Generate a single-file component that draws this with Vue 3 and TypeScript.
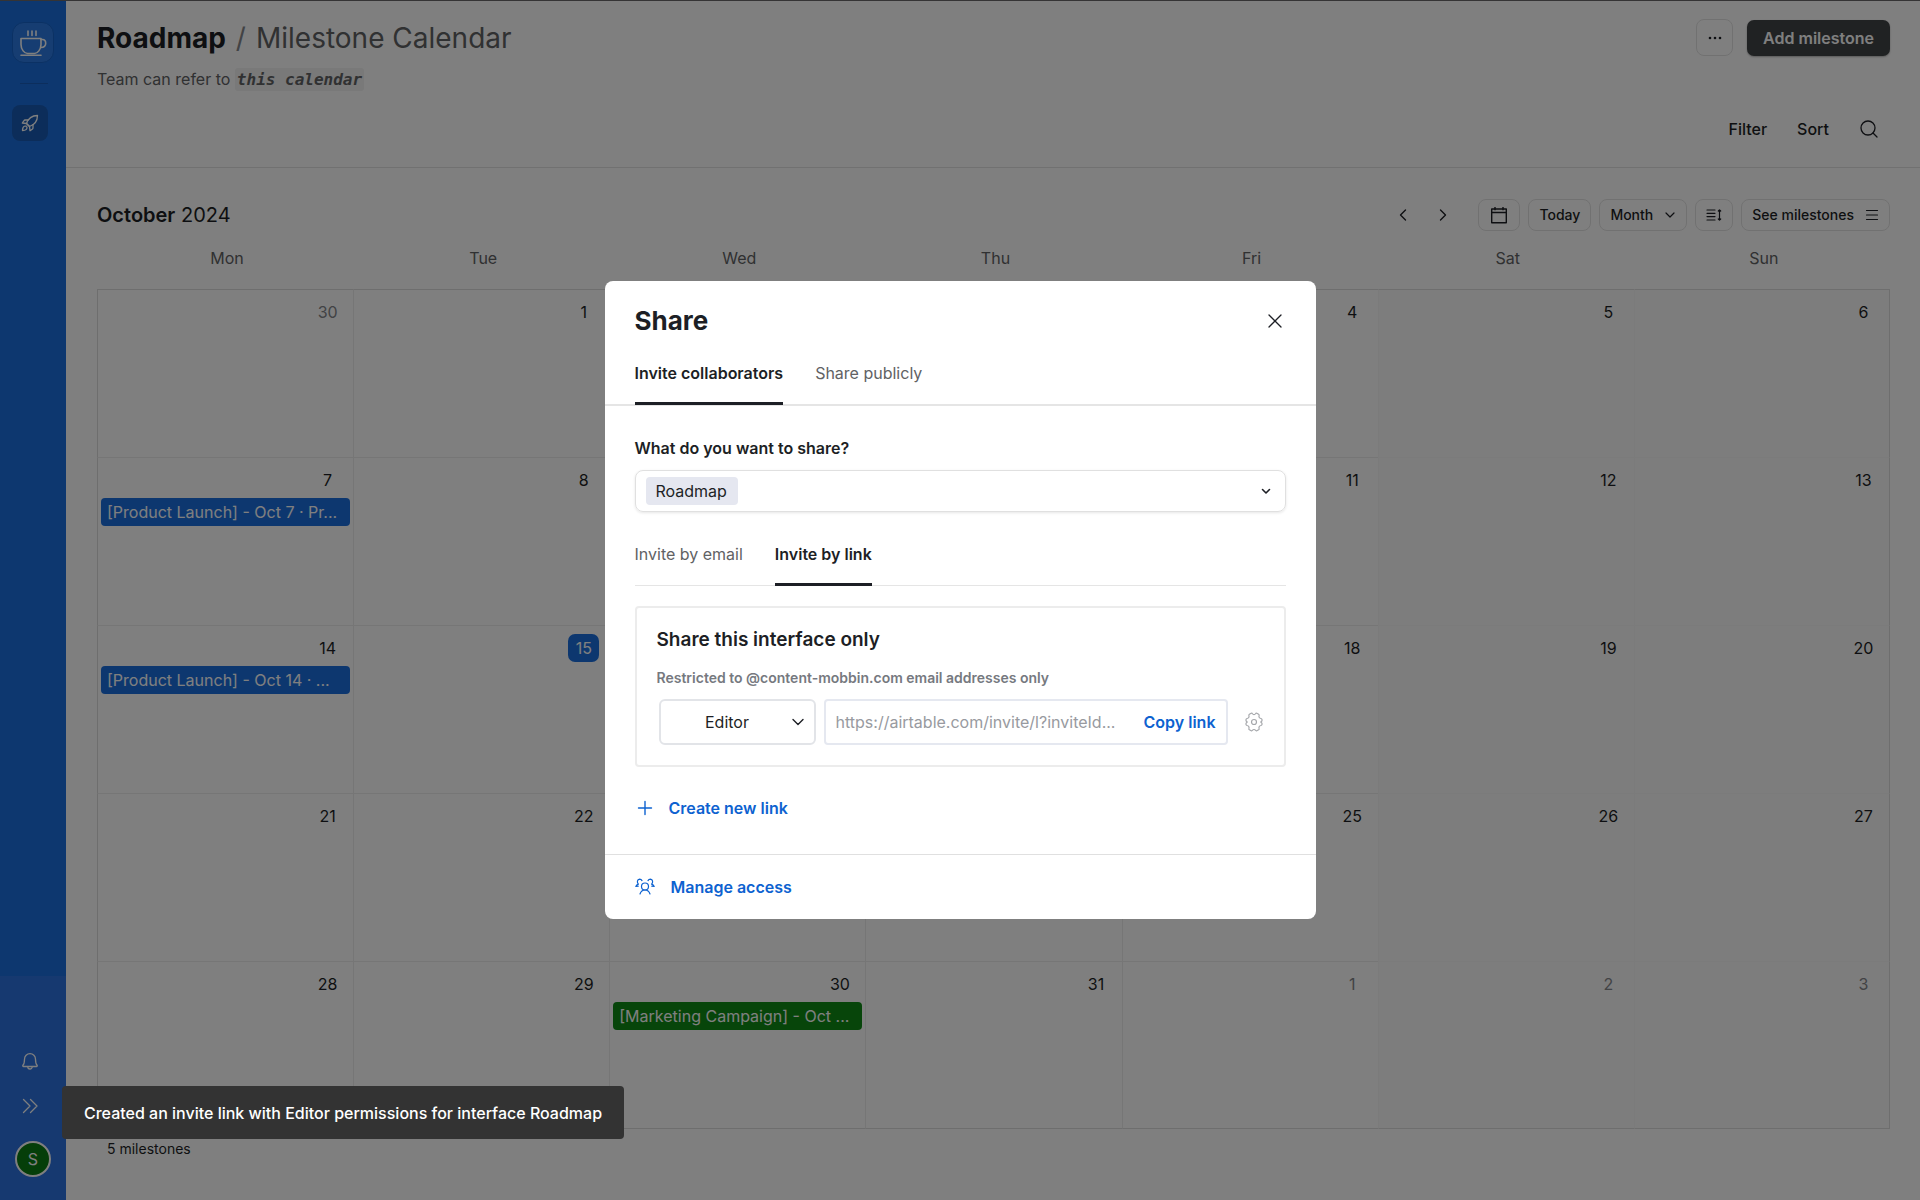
<script setup lang="ts">
import { ref } from 'vue'

interface DayEvent {
  text: string
  tone: 'blue' | 'green'
}

interface Day {
  date: number
  outside: boolean
  today: boolean
  event?: DayEvent
}

const weekdays: string[] = ['Mon', 'Tue', 'Wed', 'Thu', 'Fri', 'Sat', 'Sun']

const events: Record<number, DayEvent> = {
  7: { text: '[Product Launch] - Oct 7 · Pr...', tone: 'blue' },
  14: { text: '[Product Launch] - Oct 14 · ...', tone: 'blue' },
  30: { text: '[Marketing Campaign] - Oct ...', tone: 'green' },
}

const weeks: Day[][] = Array.from({ length: 5 }, (_, week) =>
  Array.from({ length: 7 }, (_, weekday) => {
    const n = week * 7 + weekday
    const inMonth = n >= 1 && n <= 31
    return {
      date: n === 0 ? 30 : inMonth ? n : n - 31,
      outside: !inMonth,
      today: n === 15,
      event: inMonth ? events[n] : undefined,
    }
  }),
)

const shareTarget = ref('Roadmap')
const role = ref('Editor')
const inviteUrl = ref('https://airtable.com/invite/l?inviteId...')
</script>

<template>
  <div class="app">
    <nav class="sidebar" aria-label="Workspace">
      <div class="side-top">
        <button class="logo" type="button" aria-label="Home">
          <svg width="28" height="28" viewBox="0 0 28 28" fill="none" stroke="currentColor" stroke-width="1.6" stroke-linecap="round" stroke-linejoin="round">
            <path d="M9 2v4.500M13 2v4.500M17 2v4.500" />
            <path d="M2 9.500h20v6c0 5-3.500 9-6.500 9h-7C5.500 24.500 2 20.500 2 15.500z" />
            <path d="M22 10.500h1.500c2 0 3.200 1.500 3.200 3.800 0 2.500-2 4.200-5 4.200" />
            <path d="M2 26.200h20" />
          </svg>
        </button>
        <hr class="side-rule" />
        <button class="rocket" type="button" aria-label="Interfaces">
          <svg width="20" height="20" viewBox="0 0 20 20" fill="none" stroke="currentColor" stroke-width="1.300" stroke-linecap="round" stroke-linejoin="round">
            <path d="M6.500 10.500C8 6 11.500 2.600 17.500 2.500c-.1 6-3.500 9.500-8 11z" />
            <path d="M8.300 7H5.200c-.6 0-1.100.3-1.400.8L2.300 10l4.200.5M13 11.700v3.100c0 .6-.3 1.100-.8 1.400L10 17.700l-.5-4.200M6.500 10.500l3 3" />
            <path d="M6.200 13.200c-1.300-.5-2.700.2-3.200 1.500-.3.900-.5 1.800-.5 2.800 1 0 1.900-.2 2.800-.5 1.300-.5 2-1.900 1.500-3.200" />
          </svg>
        </button>
      </div>
      <div class="side-bottom">
        <button class="side-icon" type="button" aria-label="Notifications">
          <svg width="20" height="20" viewBox="0 0 20 20" fill="none" stroke="currentColor" stroke-width="1.300" stroke-linecap="round" stroke-linejoin="round">
            <path d="M4.500 8.200a5.500 5.500 0 0 1 11 0c0 3.600.8 5.200 1.600 6 .4.500.1 1.300-.6 1.300H3.500c-.7 0-1-.8-.6-1.300.8-.8 1.600-2.400 1.600-6z" />
            <path d="M7.800 15.800a2.200 2.200 0 0 0 4.400 0" />
          </svg>
        </button>
        <button class="side-icon" type="button" aria-label="Expand">
          <svg width="20" height="20" viewBox="0 0 20 20" fill="none" stroke="currentColor" stroke-width="1.300" stroke-linecap="round" stroke-linejoin="round">
            <path d="M3.500 3.500 10 10l-6.500 6.500M10.500 3.500 17 10l-6.500 6.500" />
          </svg>
        </button>
        <button class="avatar" type="button">S</button>
      </div>
    </nav>

    <main class="main">
      <header class="header">
        <div class="title-row">
          <h1 class="title"><b>Roadmap</b><span class="slash">/</span><span class="page">Milestone Calendar</span></h1>
          <button class="more" type="button" aria-label="More">
            <svg width="16" height="16" viewBox="0 0 16 16" fill="currentColor">
              <circle cx="3" cy="8" r="1.300" /><circle cx="8" cy="8" r="1.300" /><circle cx="13" cy="8" r="1.300" />
            </svg>
          </button>
          <button class="add" type="button">Add milestone</button>
        </div>
        <p class="subtitle">Team can refer to <code>this calendar</code></p>
        <div class="tools">
          <button class="plain" type="button">Filter</button>
          <button class="plain" type="button">Sort</button>
          <button class="plain" type="button" aria-label="Search">
            <svg width="20" height="20" viewBox="0 0 20 20" fill="none" stroke="currentColor" stroke-width="1.300" stroke-linecap="round">
              <circle cx="9" cy="9" r="7" /><path d="m14 14 4 4" />
            </svg>
          </button>
        </div>
      </header>

      <section class="calendar">
        <div class="toolbar">
          <h2 class="month"><b>October</b> 2024</h2>
          <div class="arrows">
            <button class="arrow" type="button" aria-label="Previous month">
              <svg width="16" height="16" viewBox="0 0 16 16" fill="none" stroke="currentColor" stroke-width="1.400" stroke-linecap="round" stroke-linejoin="round"><path d="M10.500 3 5.500 8l5 5" /></svg>
            </button>
            <button class="arrow" type="button" aria-label="Next month">
              <svg width="16" height="16" viewBox="0 0 16 16" fill="none" stroke="currentColor" stroke-width="1.400" stroke-linecap="round" stroke-linejoin="round"><path d="m5.500 3 5 5-5 5" /></svg>
            </button>
          </div>
          <button class="pill" type="button" aria-label="Pick a date">
            <svg width="20" height="20" viewBox="0 0 20 20" fill="none" stroke="currentColor" stroke-width="1.400" stroke-linejoin="round">
              <path d="M2.700 4h14.600v13.700H2.700zM2.700 7.500h14.600M6 2v3.200M14 2v3.200" />
            </svg>
          </button>
          <button class="pill" type="button">Today</button>
          <button class="pill" type="button">
            Month
            <svg width="12" height="12" viewBox="0 0 12 12" fill="none" stroke="currentColor" stroke-width="1.200" stroke-linecap="round" stroke-linejoin="round"><path d="m2 4 4 4 4-4" /></svg>
          </button>
          <button class="pill" type="button" aria-label="Row height">
            <svg width="16" height="16" viewBox="0 0 16 16" fill="none" stroke="currentColor" stroke-width="1.200" stroke-linecap="round" stroke-linejoin="round">
              <path d="M1 3h8M1 6.300h8M1 9.600h8M1 13h8M13.500 3v10M12.300 4l1.200-1.200L14.700 4M12.300 12l1.200 1.200 1.200-1.200" />
            </svg>
          </button>
          <button class="pill" type="button">
            See milestones
            <svg width="14" height="14" viewBox="0 0 14 14" fill="none" stroke="currentColor" stroke-width="1.200" stroke-linecap="round"><path d="M1.500 2.500h11M1.500 7h11M1.500 11.500h11" /></svg>
          </button>
        </div>

        <table class="grid">
          <thead>
            <tr><th v-for="name in weekdays" :key="name" scope="col">{{ name }}</th></tr>
          </thead>
          <tbody>
            <tr v-for="(week, w) in weeks" :key="w">
              <td v-for="(day, d) in week" :key="d" :class="{ weekend: d > 4 }">
                <span class="date" :class="{ outside: day.outside, today: day.today }">{{ day.date }}</span>
                <div v-if="day.event" class="event" :class="day.event.tone">{{ day.event.text }}</div>
              </td>
            </tr>
          </tbody>
        </table>
        <p class="count">5 milestones</p>
      </section>
    </main>

    <div class="overlay">
      <div class="modal" role="dialog" aria-modal="true" aria-labelledby="share-title">
        <div class="modal-head">
          <h2 id="share-title">Share</h2>
          <button class="close" type="button" aria-label="Close">
            <svg width="18" height="18" viewBox="0 0 18 18" fill="none" stroke="currentColor" stroke-width="1.300" stroke-linecap="round"><path d="M3 3l12 12M15 3 3 15" /></svg>
          </button>
        </div>
        <div class="tabs wide">
          <button class="tab active" type="button">Invite collaborators</button>
          <button class="tab" type="button">Share publicly</button>
        </div>

        <div class="modal-body">
          <label class="question" for="share-target">What do you want to share?</label>
          <div class="target">
            <select id="share-target" v-model="shareTarget" class="chip">
              <option>Roadmap</option>
            </select>
            <svg width="12" height="12" viewBox="0 0 12 12" fill="none" stroke="currentColor" stroke-width="1.600" stroke-linecap="round" stroke-linejoin="round"><path d="m2.500 4.500 3.500 3.500 3.500-3.500" /></svg>
          </div>

          <div class="tabs">
            <button class="tab" type="button">Invite by email</button>
            <button class="tab active" type="button">Invite by link</button>
          </div>

          <section class="card">
            <h3>Share this interface only</h3>
            <p>Restricted to @content-mobbin.com email addresses only</p>
            <div class="link-row">
              <div class="role">
                <select v-model="role" aria-label="Permission">
                  <option>Editor</option>
                </select>
                <svg width="16" height="16" viewBox="0 0 16 16" fill="none" stroke="currentColor" stroke-width="1.400" stroke-linecap="round" stroke-linejoin="round"><path d="m3 5.500 5 5 5-5" /></svg>
              </div>
              <div class="link">
                <input v-model="inviteUrl" type="text" readonly aria-label="Invite link" />
                <button class="copy" type="button">Copy link</button>
              </div>
              <button class="gear" type="button" aria-label="Link settings">
                <svg width="20" height="20" viewBox="0 0 20 20" fill="none" stroke="currentColor" stroke-width="1.200" stroke-linejoin="round">
                  <circle cx="10" cy="10" r="2.500" />
                  <path d="M7.200 1.300c.5-.2 1-.1 1.300.4.700 1.100 2.300 1.100 3 0 .3-.5.800-.6 1.300-.4l1.800 1c.5.300.7.800.5 1.300-.5 1.400.3 2.700 1.800 2.900.600.100 1 .500 1.100 1v.9c0 .5-.3.800-.8 1.100-.6.300-.6.700 0 1 .5.300.8.600.8 1.100v.9c-.1.500-.5.900-1.100 1-1.500.200-2.300 1.500-1.800 2.900.2.500 0 1-.5 1.300l-1.800 1c-.5.200-1 .1-1.300-.4-.7-1.100-2.300-1.100-3 0-.3.500-.8.600-1.300.4l-1.800-1c-.5-.3-.7-.8-.5-1.300.5-1.400-.3-2.700-1.800-2.900-.600-.100-1-.500-1.100-1v-.9c0-.5.300-.8.800-1.100.6-.3.600-.7 0-1-.5-.3-.8-.6-.8-1.100v-.9c.1-.5.500-.9 1.100-1 1.500-.2 2.300-1.500 1.800-2.900-.2-.5 0-1 .5-1.300z" />
                </svg>
              </button>
            </div>
          </section>

          <button class="action" type="button">
            <svg width="20" height="20" viewBox="0 0 20 20" fill="none" stroke="currentColor" stroke-width="1.400" stroke-linecap="round"><path d="M10 3.500v13M3.500 10h13" /></svg>
            Create new link
          </button>
        </div>

        <footer class="modal-foot">
          <button class="action" type="button">
            <svg width="20" height="20" viewBox="0 0 20 20" fill="none" stroke="currentColor" stroke-width="1.200" stroke-linecap="round" stroke-linejoin="round">
              <circle cx="10" cy="9.500" r="3.500" />
              <path d="M5 17c.8-2.500 2.600-4 5-4s4.200 1.500 5 4" />
              <path d="M.8 9.500c.5-1.300 1.300-2 2.600-2.400C1.800 5.600 2 2.400 4.600 2.200c1 0 1.900.5 2.400 1.400M19.200 9.500c-.5-1.300-1.300-2-2.600-2.400 1.600-1.500 1.400-4.700-1.200-4.900-1 0-1.900.5-2.400 1.400M.8 9.500l2.400-.3M19.200 9.500l-2.400-.3" />
            </svg>
            Manage access
          </button>
        </footer>
      </div>
    </div>

    <div class="toast" role="status">Created an invite link with Editor permissions for interface Roadmap</div>
  </div>
</template>

<style>
body {
  margin: 0;
  background: #fff;
}
</style>

<style scoped>
* {
  box-sizing: border-box;
}

.app {
  display: flex;
  min-height: 100vh;
  border-top: 1px solid #6b686b;
  font-family: Inter, 'Liberation Sans', sans-serif;
  font-size: 16px;
  line-height: 24px;
  color: #1d1f25;
}

h1,
h2,
h3,
p {
  margin: 0;
  font-weight: 400;
}

b {
  font-weight: 600;
}

button,
select,
input {
  margin: 0;
  padding: 0;
  border: 0;
  background: none;
  font: inherit;
  color: inherit;
}

button {
  cursor: pointer;
}

svg {
  display: block;
  flex: none;
}

/* Sidebar */
.sidebar {
  flex: none;
  display: flex;
  flex-direction: column;
  width: 66px;
  background: #1b6fdf;
  color: #fff;
}

.side-top {
  flex: 1;
  display: flex;
  flex-direction: column;
  padding: 21px 12px 0;
}

.logo {
  display: grid;
  place-items: center;
  width: 42px;
  height: 41px;
  border: 1px solid #1763c9;
  border-radius: 12px;
  background: #2c7be4;
}

.side-rule {
  width: 28px;
  margin: 20px 0 21px 8px;
  border: 0;
  border-top: 1px solid #185dbb;
}

.rocket {
  display: grid;
  place-items: center;
  width: 36px;
  height: 36px;
  border-radius: 8px;
  background: #185bb5;
}

.side-bottom {
  display: flex;
  flex-direction: column;
  align-items: flex-start;
  gap: 25px;
  height: 224px;
  padding: 75px 0 0 15px;
  background: #2c73e0;
}

.side-icon {
  padding: 0 5px;
}

.avatar {
  width: 36px;
  height: 36px;
  border: 2px solid #fff;
  border-radius: 50%;
  background: #0a7c12;
}

/* Page header */
.main {
  flex: 1;
  min-width: 0;
}

.header {
  padding: 18px 30px 26px 31px;
  border-bottom: 1px solid #e3e3e3;
}

.title-row {
  display: flex;
  align-items: center;
}

.title {
  flex: 1;
  display: flex;
  gap: 10px;
  font-size: 28px;
  line-height: 36px;
}

.title b {
  font-weight: 700;
}

.slash {
  color: #84868a;
}

.page {
  color: #616264;
}

.more {
  display: grid;
  place-items: center;
  width: 37px;
  height: 37px;
  margin-right: 14px;
  border: 1px solid #e3e3e3;
  border-radius: 8px;
}

.add {
  height: 36px;
  padding: 0 16px;
  border-radius: 7px;
  background: #404446;
  color: #fff;
  font-weight: 600;
  box-shadow: 0 1px 2px rgba(0, 0, 0, 0.3);
}

.subtitle {
  margin-top: 11px;
  color: #616264;
}

code {
  padding: 2px;
  border-radius: 3px;
  background: #f2f2f2;
  font-family: 'DejaVu Sans Mono', monospace;
  font-size: 16px;
  font-style: italic;
  font-weight: 700;
}

.tools {
  display: flex;
  justify-content: flex-end;
  align-items: center;
  gap: 30px;
  margin: 25px 11px 0 0;
}

.plain {
  font-weight: 500;
}

/* Calendar */
.calendar {
  padding: 31px 30px 0 31px;
}

.toolbar {
  display: flex;
  align-items: center;
  gap: 8px;
}

.month {
  flex: 1;
  font-size: 20px;
}

.arrows {
  display: flex;
  gap: 8px;
  margin-right: 11px;
}

.arrow {
  display: grid;
  place-items: center;
  width: 32px;
  height: 32px;
}

.pill {
  display: flex;
  align-items: center;
  gap: 11px;
  height: 32px;
  padding: 0 10px;
  border: 1px solid #e3e3e3;
  border-radius: 8px;
  font-size: 14px;
  font-weight: 500;
}

.grid {
  width: 100%;
  table-layout: fixed;
  border-collapse: separate;
  border-spacing: 0;
}

.grid th {
  height: 58px;
  padding: 0 0 4px 4px;
  color: #616264;
  font-weight: 400;
}

.grid td {
  height: 168px;
  padding: 8px 3px 0;
  vertical-align: top;
  border: 0 solid #ececec;
  border-width: 1px 0 0 1px;
}

.grid td.weekend {
  background: #fafafa;
  border-color: #f6f6f6;
}

.grid tbody tr:first-child td {
  border-top-color: #dcdcdc;
}

.grid tbody tr:last-child td {
  border-bottom: 1px solid #dcdcdc;
}

.grid td:first-child {
  border-left-color: #dcdcdc;
}

.grid td:last-child {
  border-right: 1px solid #dcdcdc;
}

.date {
  display: block;
  width: 31px;
  margin: 0 7px 4px auto;
  border-radius: 7px;
  line-height: 28px;
  text-align: center;
}

.date.outside {
  color: #84868a;
}

.date.today {
  background: #1b6fdf;
  color: #fff;
}

.event {
  overflow: hidden;
  padding: 0 6px;
  border-radius: 4px;
  color: #fff;
  line-height: 28px;
  white-space: nowrap;
  text-overflow: ellipsis;
}

.event.blue {
  background: #1b6fdf;
}

.event.green {
  background: #0e8a14;
}

.count {
  padding: 8px 10px 0;
  font-size: 14px;
}

/* Share dialog */
.overlay {
  position: fixed;
  inset: 0;
  display: flex;
  align-items: center;
  justify-content: center;
  background: rgba(0, 0, 0, 0.5);
}

.modal {
  width: 711px;
  max-width: 100%;
  border-radius: 8px;
  background: #fff;
}

.modal-head {
  display: flex;
  align-items: center;
  justify-content: space-between;
  padding: 22px 32px 0 30px;
}

.modal-head h2 {
  font-size: 26px;
  line-height: 36px;
  font-weight: 700;
}

.tabs {
  display: flex;
  gap: 32px;
  padding-top: 18px;
  border-bottom: 1px solid #e5e5e5;
}

.tabs.wide {
  padding: 18px 30px 0;
  border-bottom-width: 2px;
}

.tab {
  height: 48px;
  margin-bottom: -1px;
  padding-bottom: 13px;
  border-bottom: 3px solid transparent;
  color: #616264;
}

.tab.active {
  border-bottom-color: #1d1f25;
  color: #1d1f25;
  font-weight: 600;
}

.modal-body {
  padding: 30px 30px 34px;
}

.question {
  display: block;
  font-weight: 600;
}

.target {
  display: flex;
  align-items: center;
  justify-content: space-between;
  height: 42px;
  margin: 10px 0 8px;
  padding: 0 13px 0 10px;
  border: 1px solid #e0e0e0;
  border-radius: 8px;
  box-shadow: 0 1px 3px rgba(0, 0, 0, 0.1);
}

.chip {
  appearance: none;
  height: 28px;
  padding: 0 10px;
  border-radius: 4px;
  background: #e5e7f0;
}

.card {
  margin-top: 20px;
  padding: 20px;
  border: 2px solid #ececec;
  border-radius: 4px;
}

.card h3 {
  font-size: 19px;
  font-weight: 600;
}

.card p {
  margin-top: 14px;
  color: #76797f;
  font-size: 14px;
  font-weight: 600;
}

.link-row {
  display: flex;
  align-items: center;
  gap: 8px;
  margin: 9px 0 0 2px;
}

.role {
  display: grid;
  align-items: center;
}

.role > * {
  grid-area: 1 / 1;
}

.role select {
  appearance: none;
  width: 157px;
  height: 46px;
  padding-right: 20px;
  border: 2px solid #e2e4e8;
  border-radius: 6px;
  text-align-last: center;
}

.role svg {
  justify-self: end;
  margin-right: 10px;
  pointer-events: none;
}

.link {
  flex: 1;
  display: flex;
  height: 46px;
  min-width: 0;
  border: 2px solid #e5e8f0;
  border-radius: 4px;
}

.link input {
  flex: 1;
  min-width: 0;
  padding: 0 10px;
  color: #989aa0;
  text-overflow: ellipsis;
}

.copy {
  padding: 0 10px;
  color: #0d62d0;
  font-weight: 600;
}

.gear {
  margin-left: 8px;
  color: #a5a7ab;
}

.action {
  display: flex;
  align-items: center;
  gap: 14px;
  color: #0d62d0;
  font-weight: 600;
}

.modal-body .action {
  margin-top: 29px;
}

.modal-foot {
  padding: 20px 30px;
  border-top: 1px solid #e0e0e0;
}

.modal-foot .action {
  gap: 16px;
}

.toast {
  position: fixed;
  left: 62px;
  bottom: 61px;
  padding: 15px 22px 14px;
  border-radius: 4px;
  background: #333;
  color: #fff;
  font-weight: 500;
}
</style>
